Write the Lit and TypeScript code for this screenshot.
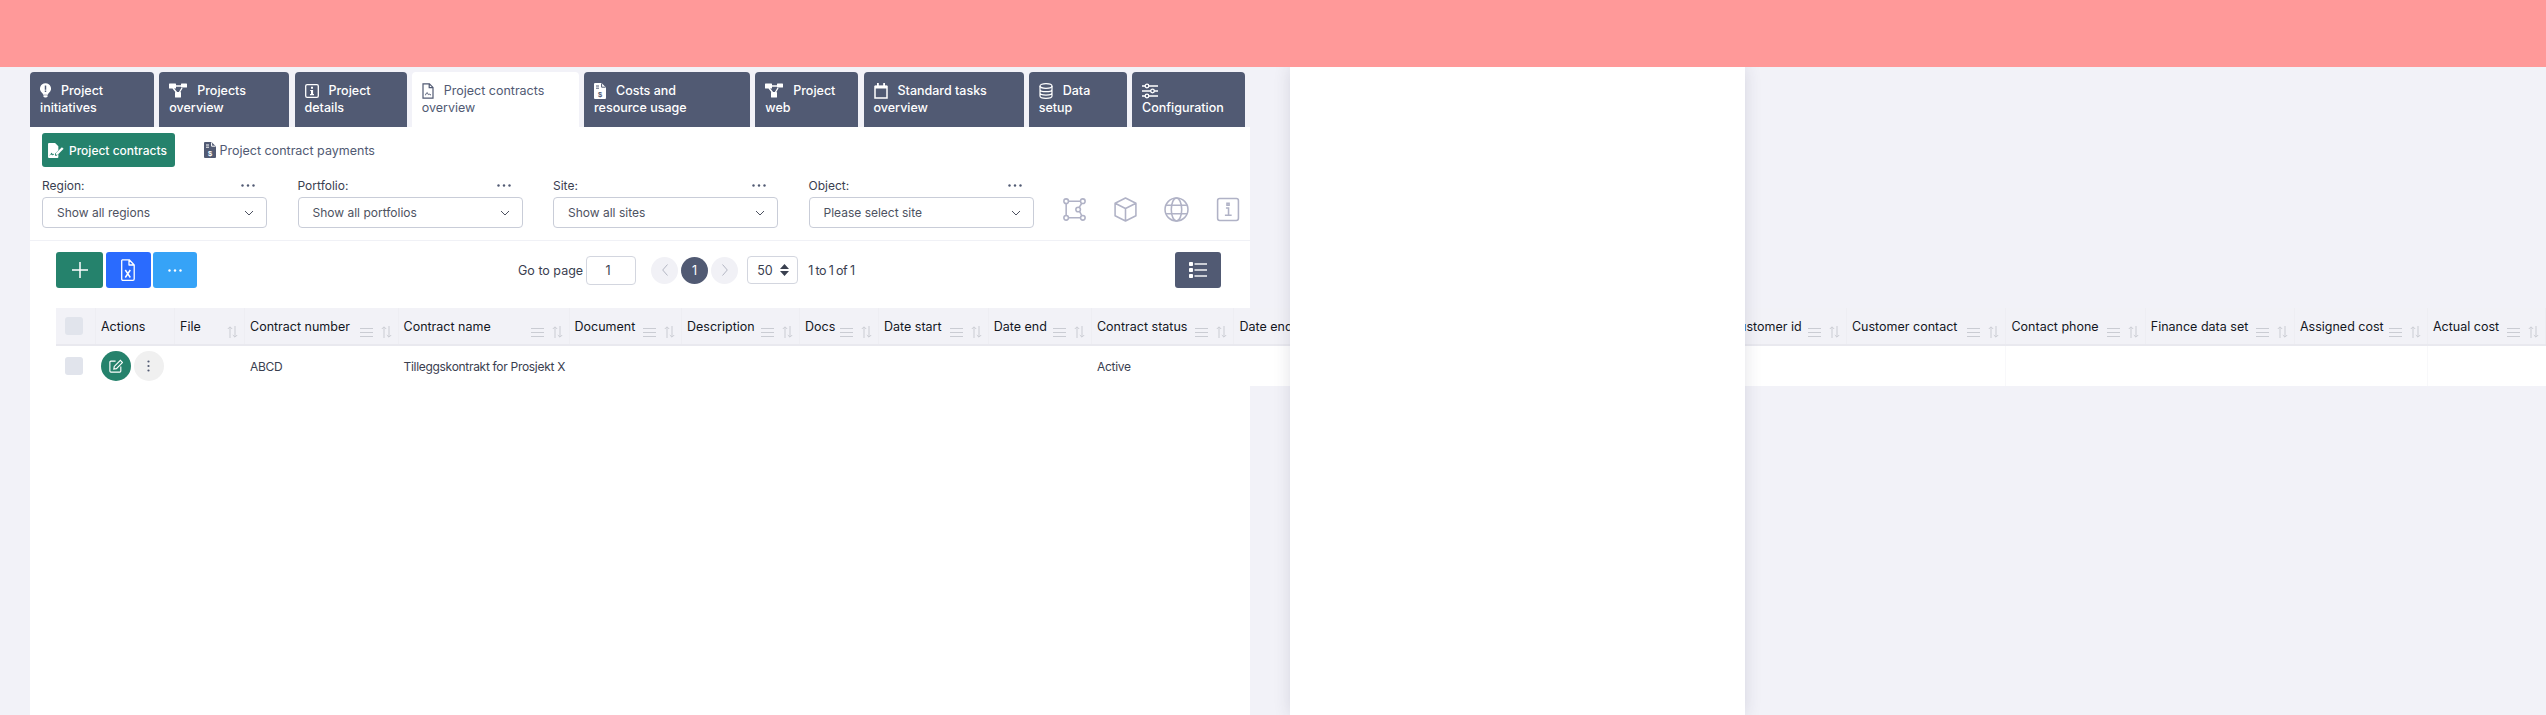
import { LitElement, css, html, nothing } from "lit";
import { customElement } from "lit/decorators.js";

const icons = {
  bulb: html`<svg viewBox="0 0 12 16" width="11" height="15"><path fill="currentColor" d="M6 0a6 6 0 0 0-3.7 10.7c.7.6 1 1.100 1.100 1.800h5.200c.1-.7.4-1.200 1.100-1.800A6 6 0 0 0 6 0z"/><rect x="5.200" y="2.600" width="1.600" height="4.600" fill="#515a73"/><rect x="5.200" y="8" width="1.600" height="1.600" fill="#515a73"/><path fill="currentColor" d="M3.800 13.300h4.400v.9L7 15.600H5l-1.200-1.400z"/></svg>`,
  diagram: html`<svg viewBox="0 0 18 15" width="18" height="15"><path fill="none" stroke="currentColor" stroke-width="1.400" d="M6 3h6M4 5l4 5M13 5l-3 5"/><rect x="0" y="0.500" width="7" height="5" rx=".6" fill="currentColor"/><rect x="12" y="0.500" width="6" height="4" rx=".6" fill="currentColor"/><rect x="6" y="9" width="6" height="5.500" rx=".6" fill="currentColor"/></svg>`,
  info: html`<svg viewBox="0 0 14 14" width="14" height="14"><rect x=".7" y=".7" width="12.600" height="12.600" rx="1.400" fill="none" stroke="currentColor" stroke-width="1.300"/><path fill="currentColor" d="M6 2.800h2v2H6zM5.200 5.900h2.900v4.200h.9v1.200H5v-1.200h1V7.100H5.200z"/></svg>`,
  contract: html`<svg viewBox="0 0 12 16" width="12" height="16"><path fill="none" stroke="currentColor" stroke-width="1.200" d="M1 .8h6.400L11 4.400v10.800H1zM7.200 .8v3.800H11"/><path fill="none" stroke="currentColor" stroke-width="1" d="M3 12.300c1-.3 1.300-2.800 2.100-2.800.8 0 .4 2 1.200 2 .5 0 .7-.5 1.100-.3.500.2.700.7 1.600.7"/></svg>`,
  invoice: html`<svg class="invoice" viewBox="0 0 12 16" width="12" height="16"><path fill="currentColor" d="M1 0h6.500L12 4.500V15a1 1 0 0 1-1 1H1a1 1 0 0 1-1-1V1a1 1 0 0 1 1-1z"/><path fill="none" stroke="var(--ink)" stroke-width="1" d="M2 3h3M2 5.200h3M7.600 .4v3.800h3.800"/><text x="6" y="13.500" text-anchor="middle" font-size="7.500" font-weight="700" font-family="Liberation Sans" fill="var(--ink)">$</text></svg>`,
  calendar: html`<svg viewBox="0 0 14 16" width="14" height="16"><path fill="none" stroke="currentColor" stroke-width="1.500" d="M1 3.500h12V15H1z"/><path fill="currentColor" d="M1 2.500h12v3H1zM3 0h1.800v3H3zM9.200 0H11v3H9.200z"/></svg>`,
  database: html`<svg viewBox="0 0 14 16" width="14" height="16" fill="none" stroke="currentColor" stroke-width="1.200"><ellipse cx="7" cy="3" rx="6" ry="2.300"/><path d="M1 3v10c0 1.300 2.700 2.300 6 2.300s6-1 6-2.300V3M1 6.400c0 1.300 2.700 2.300 6 2.300s6-1 6-2.300M1 9.800c0 1.300 2.700 2.300 6 2.300s6-1 6-2.300"/></svg>`,
  sliders: html`<svg viewBox="0 0 16 16" width="16" height="16" fill="none" stroke="currentColor" stroke-width="1.300"><path d="M0 3h16M0 8h16M0 13h16"/><circle cx="5" cy="3" r="1.800" fill="#515a73"/><circle cx="10.500" cy="8" r="1.800" fill="#515a73"/><circle cx="5" cy="13" r="1.800" fill="#515a73"/></svg>`,
  signature: html`<svg viewBox="0 0 17 16" width="16" height="15"><path fill="currentColor" d="M1 0h6.500L11 3.500v4.300L7.500 11.500v2h1.600L11 12v3a1 1 0 0 1-1 1H1a1 1 0 0 1-1-1V1a1 1 0 0 1 1-1z"/><path fill="#25826c" d="M2 12.500c1-.3 1.300-2 2-2s.3 1.500 1 1.500.6-.5 1.200-.5v.9c-.9.1-.9.6-1.700.6-1 0-.8-1-1.300-1-.3 0-.5 1-1.900 1.300z"/><path fill="currentColor" d="M8.500 12.500v-1.800L14.800 4.400l1.800 1.800-6.300 6.300z"/></svg>`,
  path3d: html`<svg viewBox="0 0 24 24" width="25" height="25" fill="none" stroke="currentColor" stroke-width="1.500"><circle cx="4" cy="4" r="2.200"/><circle cx="20" cy="4" r="2.200"/><circle cx="4" cy="20" r="2.200"/><circle cx="20" cy="20" r="2.200"/><circle cx="15.500" cy="12" r="2.200"/><path d="M6.200 4h11.600M4 6.200v11.600M6.200 20h11.600M19 6l-2.500 4M17 14l2 4"/></svg>`,
  cube: html`<svg viewBox="0 0 24 24" width="25" height="25" fill="none" stroke="currentColor" stroke-width="1.500" stroke-linejoin="round"><path d="M12 1 22 6v12l-10 5-10-5V6zM2 6l10 5 10-5M12 11v12"/></svg>`,
  globe: html`<svg viewBox="0 0 24 24" width="25" height="25" fill="none" stroke="currentColor" stroke-width="1.500"><circle cx="12" cy="12" r="11"/><ellipse cx="12" cy="12" rx="5" ry="11"/><path d="M2 8h20M2 16h20"/></svg>`,
  infoOutline: html`<svg viewBox="0 0 24 24" width="25" height="25" fill="none" stroke="currentColor" stroke-width="1.500"><rect x="2.500" y="1.500" width="20" height="21" rx="2"/><path d="M10.500 10.500h2.500v7M9.500 17.500h6.500M11.500 6h2v2h-2z"/></svg>`,
  plus: html`<svg viewBox="0 0 16 16" width="16" height="16"><path stroke="currentColor" stroke-width="1.500" d="M8 0v16M0 8h16"/></svg>`,
  excel: html`<svg viewBox="0 0 14 22" width="14" height="22"><path fill="none" stroke="currentColor" stroke-width="1.300" stroke-linejoin="round" d="M1.500.8h6.700l5 5.200v14a1.300 1.300 0 0 1-1.300 1.300H1.500A1.300 1.300 0 0 1 .7 20V1.500zM8 1v5h5"/><path fill="none" stroke="currentColor" stroke-width="1.500" d="m4.300 11 5 7.500m0-7.500-5 7.500"/></svg>`,
  dots: html`<svg viewBox="0 0 14 3" width="14" height="3" fill="currentColor"><circle cx="1.500" cy="1.500" r="1.200"/><circle cx="7" cy="1.500" r="1.200"/><circle cx="12.500" cy="1.500" r="1.200"/></svg>`,
  kebab: html`<svg viewBox="0 0 3 12" width="3" height="12" fill="currentColor"><circle cx="1.500" cy="1.500" r="1.100"/><circle cx="1.500" cy="6" r="1.100"/><circle cx="1.500" cy="10.500" r="1.100"/></svg>`,
  listing: html`<svg viewBox="0 0 18 16" width="18" height="16"><g fill="#fff"><rect x="0" y="0" width="4" height="4" rx=".8"/><rect x="0" y="6" width="4" height="4" rx=".8"/><rect x="0" y="12" width="4" height="4" rx=".8"/><rect x="5.500" y="1.300" width="12.500" height="1.400"/><rect x="5.500" y="7.300" width="12.500" height="1.400"/><rect x="5.500" y="13.300" width="12.500" height="1.400"/></g></svg>`,
  edit: html`<svg viewBox="0 0 16 16" width="14" height="14" fill="none" stroke="currentColor" stroke-width="1.300"><path d="M7.500 2.500H2.200A1.200 1.200 0 0 0 1 3.700v10.100A1.200 1.200 0 0 0 2.200 15h10.100a1.200 1.200 0 0 0 1.200-1.200V8.500"/><path d="M5.500 11.500 6 8.500 13 1.500l2.500 2.500-7 7z"/></svg>`,
  lines: html`<svg viewBox="0 0 13 9" width="13" height="9"><path stroke="currentColor" stroke-width="1.100" d="M0 .5h13M0 4.500h13M0 8.500h13"/></svg>`,
  sort: html`<svg viewBox="0 0 11 12" width="11" height="12" fill="none" stroke="currentColor" stroke-width="1"><path d="M3 12V1M.8 3 3 .8 5.200 3M8 0v11M5.800 9 8 11.200 10.200 9"/></svg>`,
  chevron: html`<svg viewBox="0 0 10 6" width="10" height="6" fill="none" stroke="currentColor" stroke-width="1"><path d="m1 1 4 4 4-4"/></svg>`,
  prev: html`<svg viewBox="0 0 6 12" width="6" height="12" fill="none" stroke="currentColor" stroke-width="1"><path d="M5.500.5 .7 6l4.800 5.500"/></svg>`,
  next: html`<svg viewBox="0 0 6 12" width="6" height="12" fill="none" stroke="currentColor" stroke-width="1"><path d="M.5.5 5.300 6 .5 11.500"/></svg>`,
  updown: html`<svg viewBox="0 0 9 12" width="9" height="12" fill="currentColor"><path d="M4.500 0 9 5H0zM4.500 12 0 7h9z"/></svg>`,
};

type Tab = { line1: string; line2: string; icon: keyof typeof icons; width: number; active?: boolean };

const TABS: Tab[] = [
  { line1: "Project", line2: "initiatives", icon: "bulb", width: 124 },
  { line1: "Projects", line2: "overview", icon: "diagram", width: 130 },
  { line1: "Project", line2: "details", icon: "info", width: 112 },
  { line1: "Project contracts", line2: "overview", icon: "contract", width: 167, active: true },
  { line1: "Costs and", line2: "resource usage", icon: "invoice", width: 166 },
  { line1: "Project", line2: "web", icon: "diagram", width: 103 },
  { line1: "Standard tasks", line2: "overview", icon: "calendar", width: 160 },
  { line1: "Data", line2: "setup", icon: "database", width: 98 },
  { line1: "", line2: "Configuration", icon: "sliders", width: 113 },
];

const FILTERS = [
  { label: "Region:", value: "Show all regions" },
  { label: "Portfolio:", value: "Show all portfolios" },
  { label: "Site:", value: "Show all sites" },
  { label: "Object:", value: "Please select site" },
];

type Column = { key: string; label: string; width: number; lines?: boolean; sort?: boolean; edge?: boolean };

const COLUMNS: Column[] = [
  { key: "check", label: "", width: 40 },
  { key: "actions", label: "Actions", width: 79 },
  { key: "file", label: "File", width: 70, sort: true },
  { key: "number", label: "Contract number", width: 153.5, lines: true, sort: true },
  { key: "name", label: "Contract name", width: 171, lines: true, sort: true },
  { key: "document", label: "Document", width: 112.5, lines: true, sort: true },
  { key: "description", label: "Description", width: 118, lines: true, sort: true },
  { key: "docs", label: "Docs", width: 79, lines: true, sort: true },
  { key: "start", label: "Date start", width: 109.7, lines: true, sort: true },
  { key: "end", label: "Date end", width: 103.3, lines: true, sort: true },
  { key: "status", label: "Contract status", width: 142.5, lines: true, sort: true },
  { key: "endActual", label: "Date end", width: 165.5, lines: true, sort: true },
  { key: "hidden", label: "", width: 325 },
  { key: "customerId", label: "Customer id", width: 122, lines: true, sort: true },
  { key: "customerContact", label: "Customer contact", width: 159.5, lines: true, sort: true, edge: true },
  { key: "phone", label: "Contact phone", width: 139.3, lines: true, sort: true },
  { key: "finance", label: "Finance data set", width: 149.2, lines: true, sort: true },
  { key: "assigned", label: "Assigned cost", width: 133, lines: true, sort: true, edge: true },
  { key: "actual", label: "Actual cost", width: 118, lines: true, sort: true },
];

const ROWS: Record<string, string>[] = [
  { number: "ABCD", name: "Tilleggskontrakt for Prosjekt X", status: "Active" },
];

@customElement("app-root")
export class AppRoot extends LitElement {
  static styles = css`
    :host {
      display: block;
      position: relative;
      height: 715px;
      overflow: hidden;
      background: #f2f2f8;
      color: #2b3040;
      font-family: Inter, "Liberation Sans", sans-serif;
      font-size: 12px;
    }

    .topbar {
      position: relative;
      z-index: 2;
      height: 67px;
      background: #ff9999;
    }

    .card {
      margin: 5px 0 0 30px;
      width: 1220px;
      height: 643px;
      background: #fff;
    }

    .tabs {
      display: flex;
      gap: 5.25px;
      height: 55px;
      background: #f2f2f8;
    }

    .tab {
      --ink: #515a73;
      flex: none;
      box-sizing: border-box;
      padding: 10px 0 0 10px;
      border-radius: 4px 4px 0 0;
      background: #515a73;
      color: #fff;
      font-size: 12.5px;
      font-weight: 500;
      line-height: 17px;
      white-space: nowrap;
    }

    .tab.active {
      background: #fff;
      color: #515a73;
      font-weight: 400;
    }

    .tab-line {
      display: flex;
      align-items: center;
      gap: 10px;
      height: 17px;
    }

    .subnav {
      display: flex;
      align-items: center;
      gap: 28.5px;
      padding: 6px 0 0 12px;
    }

    .pill,
    .sublink {
      display: flex;
      align-items: center;
      height: 34px;
    }

    .pill {
      box-sizing: border-box;
      gap: 5px;
      width: 133px;
      padding-left: 6px;
      border-radius: 3px;
      background: #25826c;
      color: #fff;
      font-weight: 500;
    }

    .sublink {
      --ink: #fff;
      gap: 4px;
      color: #515a73;
      font-size: 12.5px;
    }

    .filters {
      display: flex;
      padding: 8px 0 12px 12px;
      border-bottom: 1px solid #f0f1f6;
    }

    .filter {
      width: 225px;
      margin-right: 30.5px;
    }

    .filter-head {
      display: flex;
      align-items: center;
      justify-content: space-between;
      height: 20px;
      margin-bottom: 2px;
      color: #3a4050;
    }

    .filter-dots {
      display: flex;
      margin-right: 12px;
      color: #515a73;
    }

    .select {
      box-sizing: border-box;
      display: flex;
      align-items: center;
      justify-content: space-between;
      height: 31px;
      padding: 0 12px 0 14px;
      border: 1px solid #c9cdd8;
      border-radius: 4px;
      background: #fff;
      color: #4d5261;
    }

    .tools {
      display: flex;
      align-items: center;
      gap: 26px;
      margin: 22px 0 0 -2px;
      height: 25px;
      color: #b0b2c6;
    }

    .toolbar {
      display: flex;
      align-items: center;
      justify-content: space-between;
      padding: 11px 28.5px 0 26px;
    }

    .actions {
      display: flex;
      gap: 2.5px;
    }

    .btn {
      display: flex;
      align-items: center;
      justify-content: center;
      height: 36px;
      border-radius: 3px;
      color: #fff;
    }

    .btn.add {
      width: 47px;
      background: #25826c;
    }

    .btn.excel {
      width: 45px;
      background: #2a6bfe;
    }

    .btn.more {
      width: 44px;
      background: #36a3f7;
    }

    .btn.list {
      width: 46px;
      background: #515a73;
    }

    .pager {
      display: flex;
      align-items: center;
      font-size: 12.5px;
      color: #3a4050;
    }

    .page-input {
      box-sizing: border-box;
      display: flex;
      align-items: center;
      justify-content: center;
      width: 50px;
      height: 29px;
      margin: 0 15px 0 3px;
      border: 1px solid #d3d6df;
      border-radius: 4px;
      padding-right: 6px;
    }

    .circle {
      display: flex;
      align-items: center;
      justify-content: center;
      width: 27px;
      height: 27px;
      margin-right: 3px;
      border-radius: 50%;
      background: #f1f1f6;
      color: #b3b6c3;
    }

    .circle.current {
      background: #515a73;
      color: #fff;
    }

    .page-size {
      box-sizing: border-box;
      display: flex;
      align-items: center;
      justify-content: space-between;
      width: 51px;
      height: 28px;
      margin: 0 10px 0 6px;
      padding: 0 8px 0 9px;
      border: 1px solid #d3d6df;
      border-radius: 4px;
    }

    .range {
      letter-spacing: -0.6px;
    }

    .table {
      width: max-content;
      margin: 20px 0 0 26px;
    }

    .row {
      display: flex;
      background: #fff;
    }

    .row.head {
      background: #f2f2f7;
      border-bottom: 2px solid #e9e9ef;
    }

    .cell {
      flex: none;
      box-sizing: border-box;
      display: flex;
      align-items: center;
      height: 36px;
      padding: 0 6px 0 5px;
      white-space: nowrap;
    }

    .head .cell {
      border-right: 1px solid #eeeef3;
      font-size: 12.5px;
      color: #14171f;
      overflow: hidden;
    }

    .body .cell {
      height: 40px;
      color: #3a4050;
      letter-spacing: -0.3px;
    }

    .body .cell.edge {
      border-right: 1px solid #f8f8fa;
    }

    .check {
      width: 18px;
      height: 18px;
      margin-left: 4px;
      border-radius: 3px;
      background: #e1e4ec;
    }

    .marks {
      display: flex;
      align-items: center;
      gap: 8px;
      margin: 12px 0 0 auto;
      color: #cacCD3;
    }

    .round {
      display: flex;
      align-items: center;
      justify-content: center;
      width: 30px;
      height: 30px;
      border-radius: 50%;
    }

    .round.edit {
      background: #25826c;
      color: #fff;
    }

    .round.menu {
      margin-left: 2.5px;
      background: #f0f0f0;
      color: #515a73;
    }

    .panel {
      position: absolute;
      z-index: 1;
      top: 67px;
      bottom: 0;
      left: 1290px;
      width: 455px;
      background: #fff;
      box-shadow: 0 0 16px rgba(40, 40, 80, 0.14);
    }
  `;

  private renderTab(tab: Tab) {
    return html`<div class="tab ${tab.active ? "active" : ""}" style="width:${tab.width}px">
      <div class="tab-line">${icons[tab.icon]}<span>${tab.line1}</span></div>
      <div class="tab-line">${tab.line2}</div>
    </div>`;
  }

  private renderFilter(filter: { label: string; value: string }) {
    return html`<div class="filter">
      <div class="filter-head">
        <span>${filter.label}</span><span class="filter-dots">${icons.dots}</span>
      </div>
      <div class="select"><span>${filter.value}</span>${icons.chevron}</div>
    </div>`;
  }

  private renderHeadCell(col: Column) {
    return html`<div class="cell" style="width:${col.width}px">
      ${col.key === "check" ? html`<div class="check"></div>` : col.label}
      ${col.sort
        ? html`<div class="marks">${col.lines ? icons.lines : nothing}${icons.sort}</div>`
        : nothing}
    </div>`;
  }

  private renderBodyCell(col: Column, row: Record<string, string>) {
    let content: unknown = row[col.key] ?? "";
    if (col.key === "check") content = html`<div class="check"></div>`;
    if (col.key === "actions")
      content = html`<div class="round edit">${icons.edit}</div>
        <div class="round menu">${icons.kebab}</div>`;
    return html`<div class="cell ${col.edge ? "edge" : ""}" style="width:${col.width}px">${content}</div>`;
  }

  render() {
    return html`
      <div class="topbar"></div>
      <div class="card">
        <div class="tabs">${TABS.map(tab => this.renderTab(tab))}</div>
        <div class="subnav">
          <div class="pill">${icons.signature}Project contracts</div>
          <div class="sublink">${icons.invoice}Project contract payments</div>
        </div>
        <div class="filters">
          ${FILTERS.map(filter => this.renderFilter(filter))}
          <div class="tools">
            ${icons.path3d}${icons.cube}${icons.globe}${icons.infoOutline}
          </div>
        </div>
        <div class="toolbar">
          <div class="actions">
            <div class="btn add">${icons.plus}</div>
            <div class="btn excel">${icons.excel}</div>
            <div class="btn more">${icons.dots}</div>
          </div>
          <div class="pager">
            Go to page
            <div class="page-input">1</div>
            <div class="circle">${icons.prev}</div>
            <div class="circle current">1</div>
            <div class="circle">${icons.next}</div>
            <div class="page-size">50 ${icons.updown}</div>
            <span class="range">1 to 1 of 1</span>
          </div>
          <div class="btn list">${icons.listing}</div>
        </div>
        <div class="table">
          <div class="row head">${COLUMNS.map(col => this.renderHeadCell(col))}</div>
          ${ROWS.map(
            row => html`<div class="row body">${COLUMNS.map(col => this.renderBodyCell(col, row))}</div>`
          )}
        </div>
      </div>
      <div class="panel"></div>
    `;
  }
}
